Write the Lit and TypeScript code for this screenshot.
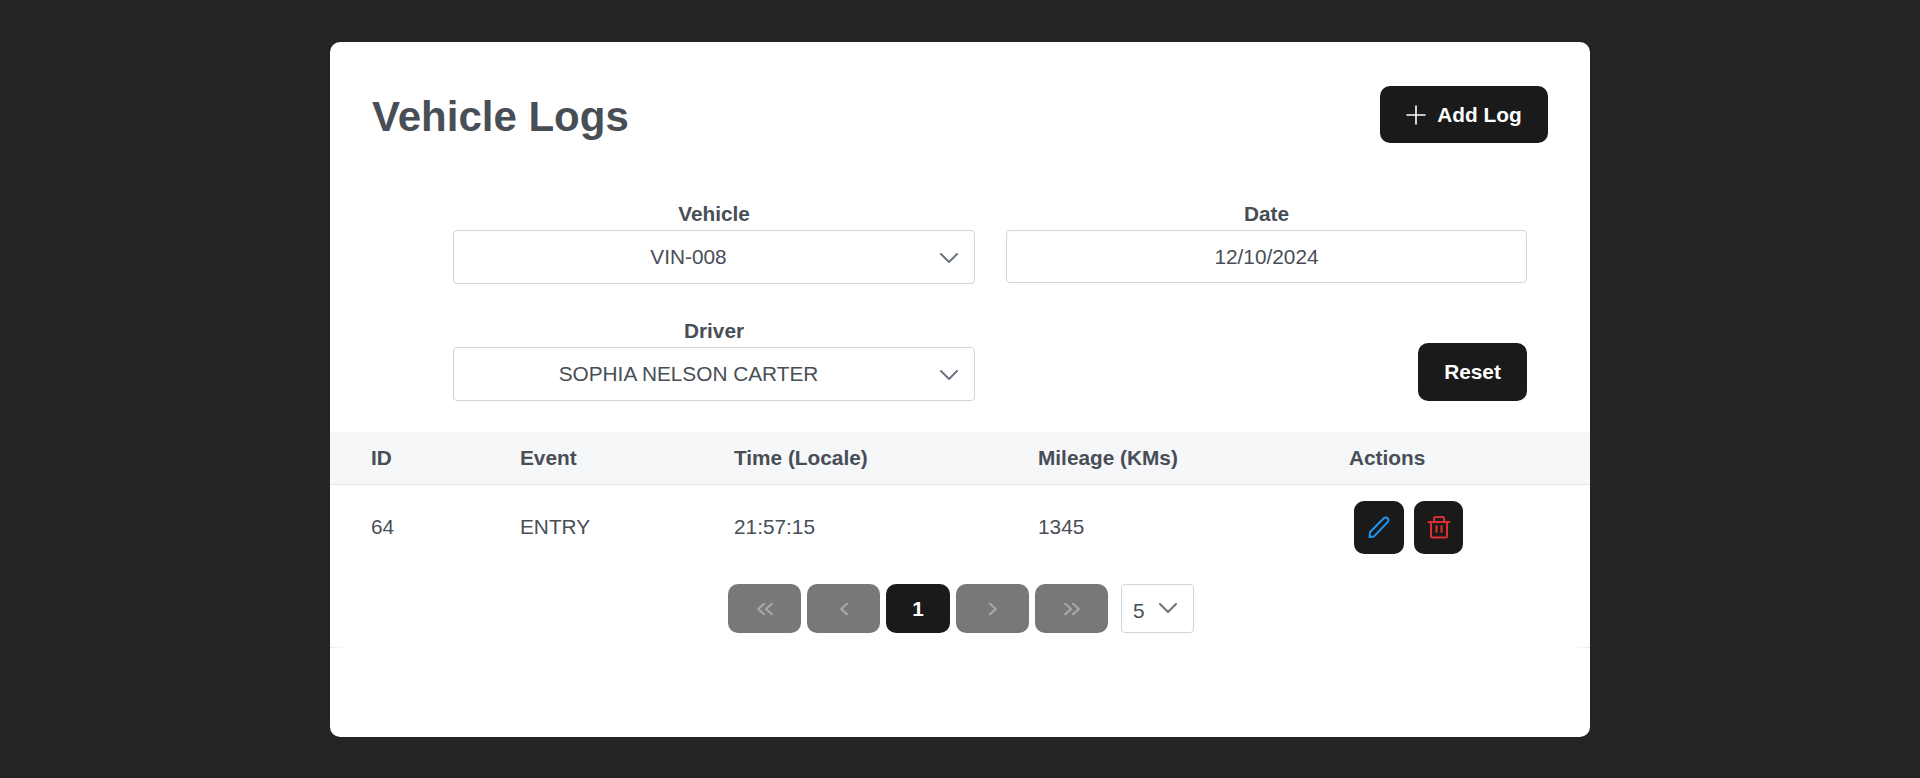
import { LitElement, html, css, svg } from "lit";
import { customElement } from "lit/decorators.js";

const chevronDown = html`<svg class="chev" viewBox="0 0 20 12" fill="none" stroke="#6b7280" stroke-width="2" stroke-linecap="round" stroke-linejoin="round"><path d="M2 2l8 8 8-8"/></svg>`;

const pageIcon = (d: string) => html`<svg class="page-icon" viewBox="0 0 20 20" fill="none" stroke="#a8a8a8" stroke-width="2.2" stroke-linecap="round" stroke-linejoin="round">${svg`<path d=${d} />`}</svg>`;

@customElement("app-root")
export class AppRoot extends LitElement {
  static styles = css`
    :host {
      display: block;
      height: 778px;
      background: #242424;
      font-family: "Liberation Sans", Arial, sans-serif;
      color: #484e56;
      overflow: hidden;
    }
    .card {
      width: 1260px;
      height: 695px;
      margin: 0 auto;
      position: relative;
      top: 42px;
      background: #fff;
      border-radius: 10px;
      box-sizing: border-box;
      padding-top: 44px;
    }
    .head {
      display: flex;
      justify-content: space-between;
      align-items: flex-start;
      padding: 0 42px;
      height: 116px;
    }
    h1 {
      margin: 7px 0 0;
      font-size: 42px;
      line-height: 48px;
      font-weight: 700;
    }
    .btn {
      display: flex;
      align-items: center;
      justify-content: center;
      background: #1a1a1a;
      color: #fff;
      font-size: 20.8px;
      font-weight: 700;
      border-radius: 10px;
    }
    .add {
      width: 168px;
      height: 57px;
      gap: 11px;
    }
    .add svg {
      width: 20px;
      height: 20px;
    }
    .filters {
      display: grid;
      grid-template-columns: 522px 521px;
      column-gap: 31px;
      row-gap: 35px;
      padding-left: 123px;
      height: 230px;
      align-content: start;
    }
    .field {
      display: flex;
      flex-direction: column;
      align-items: center;
    }
    .field label {
      font-size: 20.8px;
      line-height: 24px;
      font-weight: 700;
      margin-bottom: 4px;
    }
    .box {
      position: relative;
      width: 100%;
      height: 54px;
      box-sizing: border-box;
      border: 1px solid #d1d5db;
      border-radius: 4px;
      display: flex;
      align-items: center;
      justify-content: center;
      font-size: 20.8px;
    }
    .box.select {
      padding-right: 51px;
    }
    .box.date {
      height: 53px;
    }
    .chev {
      position: absolute;
      right: 15px;
      top: 21px;
      width: 20px;
      height: 12px;
    }
    .reset-cell {
      display: flex;
      justify-content: flex-end;
      align-items: flex-end;
    }
    .reset {
      width: 109px;
      height: 58px;
    }
    .row {
      display: grid;
      grid-template-columns: 149px 214px 304px 311px 1fr;
      padding-left: 41px;
      font-size: 20.8px;
      align-items: center;
    }
    .row.th {
      height: 53px;
      box-sizing: border-box;
      background: #f6f7f9;
      border-bottom: 1px solid #e5e7eb;
      font-weight: 700;
    }
    .row.td {
      height: 84px;
    }
    .actions {
      display: flex;
      gap: 10px;
      padding-left: 5px;
    }
    .act {
      height: 53px;
      background: #1a1a1a;
      border-radius: 10px;
      display: flex;
      align-items: center;
      justify-content: center;
    }
    .act.edit {
      width: 50px;
    }
    .act.del {
      width: 49px;
    }
    .act svg {
      width: 24px;
      height: 24px;
    }
    .pager {
      display: flex;
      justify-content: center;
      padding-left: 2px;
      padding-top: 15px;
      gap: 6px;
      height: 63px;
      box-sizing: content-box;
    }
    .pg {
      width: 73px;
      height: 49px;
      background: #787878;
      border-radius: 10px;
      display: flex;
      align-items: center;
      justify-content: center;
    }
    .pg.on {
      width: 64px;
      background: #1a1a1a;
      color: #fff;
      font-size: 20.8px;
      font-weight: 700;
    }
    .page-icon {
      width: 20px;
      height: 20px;
    }
    .size {
      position: relative;
      width: 73px;
      height: 49px;
      margin-left: 7px;
      box-sizing: border-box;
      border: 1px solid #d1d5db;
      border-radius: 4px;
      font-size: 20.8px;
      line-height: 52px;
      padding-left: 11px;
    }
    .size .chev {
      right: 15px;
      top: 17px;
    }
    .rule {
      height: 1px;
      background: linear-gradient(to right, #e5e7eb, #fff 16px, #fff calc(100% - 16px), #e5e7eb);
    }
  `;

  render() {
    return html`
      <div class="card">
        <div class="head">
          <h1>Vehicle Logs</h1>
          <div class="btn add">
            <svg viewBox="0 0 20 20" fill="none" stroke="#fff" stroke-width="1.6" stroke-linecap="round"><path d="M10 1v18M1 10h18"/></svg>
            Add Log
          </div>
        </div>
        <div class="filters">
          <div class="field">
            <label>Vehicle</label>
            <div class="box select">VIN-008${chevronDown}</div>
          </div>
          <div class="field">
            <label>Date</label>
            <div class="box date">12/10/2024</div>
          </div>
          <div class="field">
            <label>Driver</label>
            <div class="box select">SOPHIA NELSON CARTER${chevronDown}</div>
          </div>
          <div class="reset-cell"><div class="btn reset">Reset</div></div>
        </div>
        <div class="row th">
          <div>ID</div><div>Event</div><div>Time (Locale)</div><div>Mileage (KMs)</div><div>Actions</div>
        </div>
        <div class="row td">
          <div>64</div><div>ENTRY</div><div>21:57:15</div><div>1345</div>
          <div class="actions">
            <div class="act edit">
              <svg viewBox="0 0 24 24" fill="none" stroke="#2196f3" stroke-width="2" stroke-linejoin="round"><path d="M2.5 22l.6-5L16.8 3.3c1.1-1.1 2.7-1.1 3.8 0 1.1 1.1 1.1 2.700 0 3.800L7 21.400 2.500 22z"/></svg>
            </div>
            <div class="act del">
              <svg viewBox="0 0 24 24" fill="none" stroke="#dc2f2f" stroke-width="2" stroke-linecap="round" stroke-linejoin="round"><path d="M1.500 7h21M7 7V3.500C7 2.700 7.700 2 8.500 2h7c.8 0 1.500.7 1.500 1.500V7M4 7v14c0 .8.7 1.500 1.500 1.500h13c.8 0 1.500-.7 1.500-1.500V7M9.500 11v6M14.500 11v6"/></svg>
            </div>
          </div>
        </div>
        <div class="pager">
          <div class="pg">${pageIcon("M9 4.800L3.200 10 9 15.200M16.800 4.800L11 10l5.800 5.200")}</div>
          <div class="pg">${pageIcon("M13 4.800L7.200 10l5.800 5.200")}</div>
          <div class="pg on">1</div>
          <div class="pg">${pageIcon("M7 4.800L12.800 10 7 15.200")}</div>
          <div class="pg">${pageIcon("M3.200 4.800L9 10l-5.800 5.200M11 4.800L16.800 10 11 15.200")}</div>
          <div class="size">5${chevronDown}</div>
        </div>
        <div class="rule"></div>
      </div>
    `;
  }
}
